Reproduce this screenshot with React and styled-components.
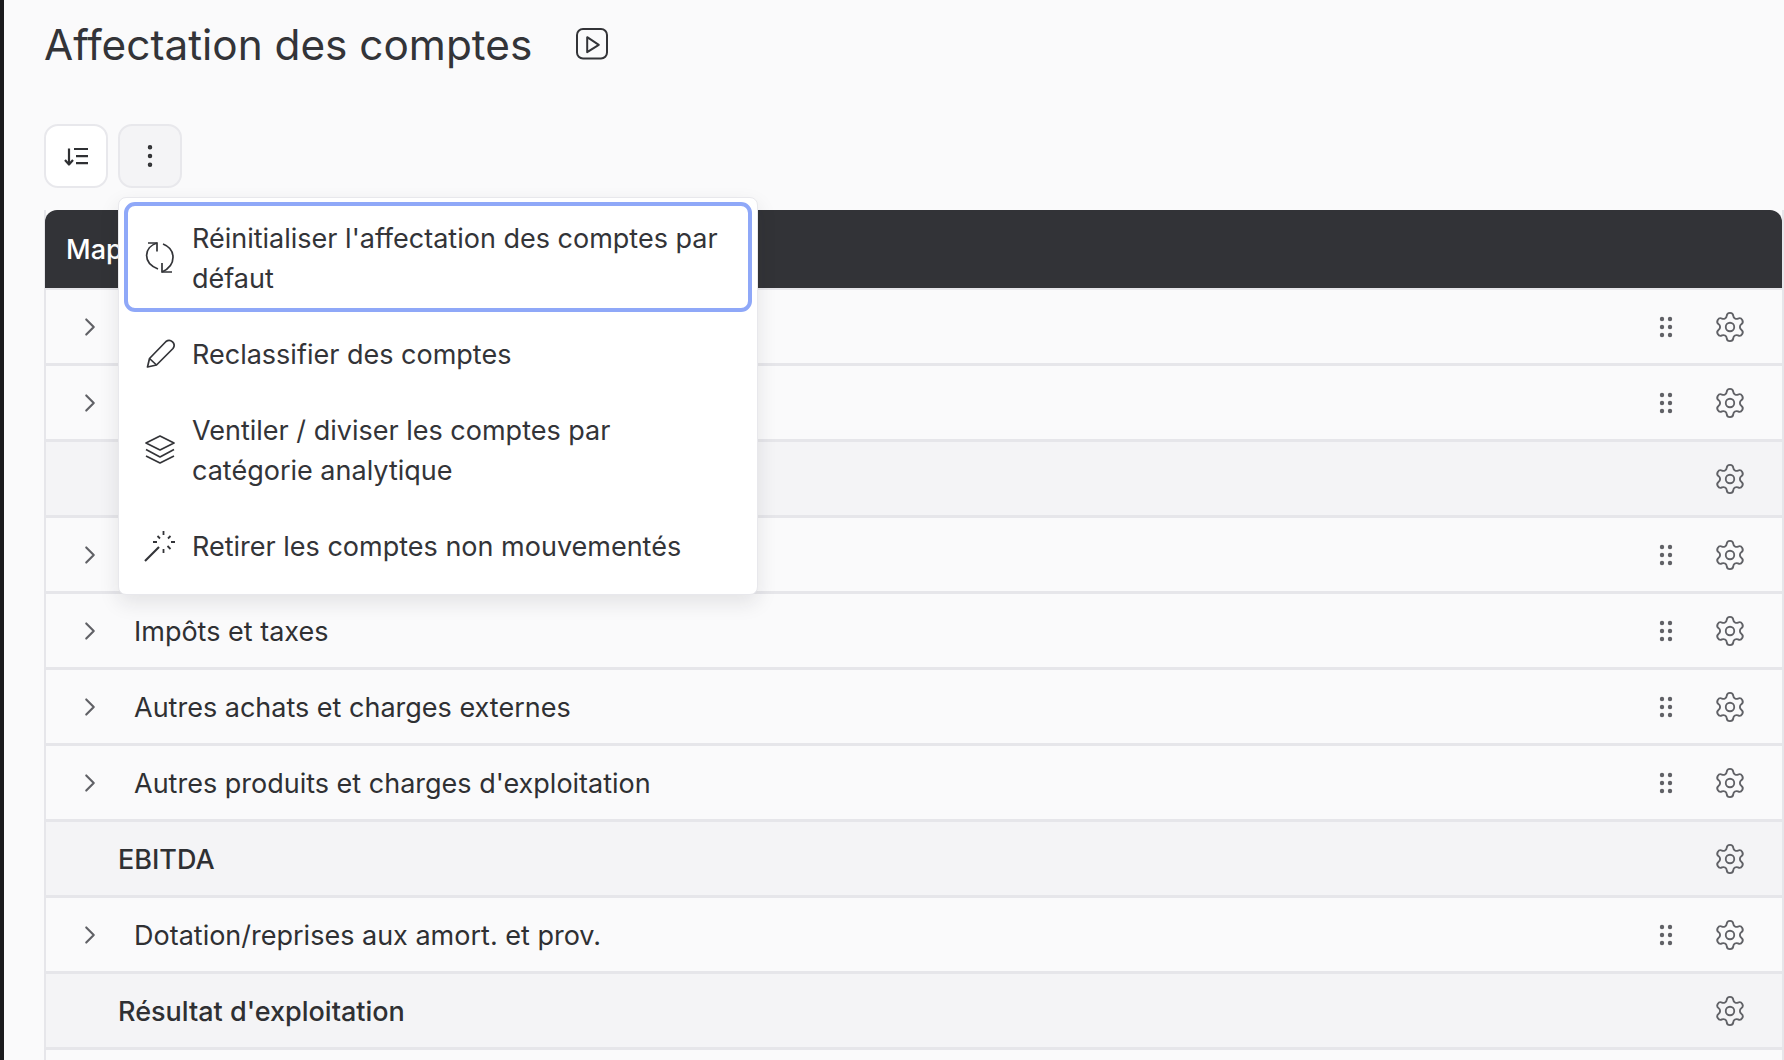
import React from 'react';
import styled, { createGlobalStyle } from 'styled-components';
import { ChevronRight, EllipsisVertical, Settings } from 'lucide-react';

const GlobalStyle = createGlobalStyle`
  html, body {
    margin: 0;
    height: 100%;
    background: #fafafb;
    overflow: hidden;
  }
  * { box-sizing: border-box; }
`;

const Page = styled.div`
  height: 1060px;
  overflow: hidden;
  border-left: 4px solid #1b1b1d;
  padding: 14px 0 0 40px;
  font-family: Inter, "Liberation Sans", sans-serif;
  color: #2f3033;
`;

const TitleRow = styled.div`
  display: flex;
  align-items: center;
  gap: 44px;
  height: 60px;
`;

const Title = styled.h1`
  margin: 0;
  padding-top: 2px;
  font-size: 42.3px;
  font-weight: 400;
  line-height: 60px;
  color: #333438;
`;

const Toolbar = styled.div`
  position: relative;
  display: flex;
  gap: 10px;
  margin-top: 50px;
`;

const ToolButton = styled.button`
  display: flex;
  align-items: center;
  justify-content: center;
  width: 64px;
  height: 64px;
  padding: 0;
  border: 2px solid #e8e8ec;
  border-radius: 14px;
  color: #2f3033;
  background: ${(p) => (p.$active ? '#f4f4f6' : '#ffffff')};
`;

const Menu = styled.div`
  position: absolute;
  top: 73px;
  left: 74px;
  z-index: 5;
  width: 640px;
  padding: 4px 5px 8px;
  border: 1px solid #e8e8ec;
  border-radius: 8px;
  background: #ffffff;
  box-shadow: 0 8px 20px rgba(30, 30, 40, 0.1);
`;

const MenuItem = styled.div`
  display: flex;
  align-items: center;
  gap: 12px;
  min-height: 82px;
  padding: 13px 23px 9px 12px;
  border: 4px solid ${(p) => (p.$focused ? '#8fa8f8' : 'transparent')};
  border-radius: 11px;
  font-size: 27px;
  line-height: 40px;
  color: #333438;
`;

const MenuLabel = styled.span`
  flex: 1;
`;

const Table = styled.div`
  margin-top: 22px;
  border-left: 2px solid #e6e6ea;
  border-right: 2px solid #e6e6ea;
`;

const Head = styled.div`
  height: 80px;
  margin-left: -1px;
  padding-left: 21px;
  border-radius: 12px 12px 0 0;
  border-bottom: 2px solid #e6e6ea;
  background: #323337;
  color: #ffffff;
  font-size: 27px;
  font-weight: 500;
  line-height: 80px;
`;

const Row = styled.div`
  display: flex;
  align-items: center;
  height: 76px;
  border-bottom: 3px solid #e6e6ea;
  background: ${(p) => (p.$total ? '#f4f4f6' : '#fafafb')};
  font-size: 27px;
`;

const Toggle = styled.span`
  display: flex;
  align-items: center;
  justify-content: center;
  flex: none;
  width: 88px;
  color: #606166;
`;

const Label = styled.span`
  flex: 1;
  padding-top: 2px;
  color: #2f3033;
  font-weight: ${(p) => (p.$total ? 500 : 400)};
  padding-left: ${(p) => (p.$total ? '72px' : '0')};
`;

const ActionSlot = styled.span`
  display: flex;
  align-items: center;
  justify-content: center;
  flex: none;
  width: 64px;
  color: #606166;
`;

const Actions = styled.div`
  display: flex;
  flex: none;
  margin-right: 20px;
`;

const PlayIcon = () => (
  <svg width="32" height="32" viewBox="11.5 12.5 32 32" fill="none" stroke="#333438" strokeWidth="2" strokeLinejoin="round">
    <rect x="12.5" y="13.5" width="30" height="29.5" rx="6" />
    <path d="M22.7 21.7v15l11.6-7.4z" />
  </svg>
);

const SortIcon = () => (
  <svg width="40" height="40" viewBox="6 5.5 40 40" fill="none" stroke="currentColor" strokeWidth="2.2">
    <path d="M19 18v15" />
    <path d="M15 29.5l4 4.5 4-4.5" strokeLinejoin="round" />
    <path d="M24 18.5h14M26 25.7h12M26 32.7h12" />
  </svg>
);

const ResetIcon = () => (
  <svg width="40" height="40" viewBox="10 9 40 40" fill="none" stroke="currentColor" strokeWidth="1.7">
    <path d="M27 13C14 17 12 33 28 39" />
    <path d="M18 13h9v8.5" />
    <path d="M33 14c13 5 14 21-1 28" />
    <path d="M42 42H32v-9" />
  </svg>
);

const PencilIcon = () => (
  <svg width="40" height="40" viewBox="10 10 40 40" fill="none" stroke="currentColor" strokeWidth="1.7" strokeLinejoin="round">
    <path d="M17.5 42l2-8.5L36 16.5a5 5 0 0 1 7 7L26.5 40z" />
    <path d="M19.5 33.5l7 6.5" />
  </svg>
);

const LayersIcon = () => (
  <svg width="40" height="40" viewBox="10 11 40 40" fill="none" stroke="currentColor" strokeWidth="1.7" strokeLinejoin="round">
    <path d="M16 23l14-7 14 7-14 7z" />
    <path d="M16 29.5L30 37l14-7.5" />
    <path d="M16 36l14 7 14-7" />
  </svg>
);

const WandIcon = () => (
  <svg width="40" height="40" viewBox="10 7 40 40" fill="none" stroke="currentColor" strokeWidth="1.8">
    <path d="M15 41l14-14" strokeWidth="2.2" />
    <path d="M33.5 11v4M33.5 29v4M23 22h4M41 22h4M27.5 16l2.5 2.5M40.5 16L38 18.5M37.5 26l3 3" />
  </svg>
);

const GripIcon = () => (
  <svg width="14" height="22" viewBox="0 0 14 22" fill="currentColor">
    <circle cx="3" cy="3" r="2.2" />
    <circle cx="11" cy="3" r="2.2" />
    <circle cx="3" cy="11" r="2.2" />
    <circle cx="11" cy="11" r="2.2" />
    <circle cx="3" cy="19" r="2.2" />
    <circle cx="11" cy="19" r="2.2" />
  </svg>
);

const menuItems = [
  { label: "Réinitialiser l'affectation des comptes par défaut", icon: <ResetIcon />, focused: true },
  { label: 'Reclassifier des comptes', icon: <PencilIcon /> },
  { label: 'Ventiler / diviser les comptes par catégorie analytique', icon: <LayersIcon /> },
  { label: 'Retirer les comptes non mouvementés', icon: <WandIcon /> },
];

const rows = [
  { label: '' },
  { label: '' },
  { label: '', total: true },
  { label: '' },
  { label: 'Impôts et taxes' },
  { label: 'Autres achats et charges externes' },
  { label: "Autres produits et charges d'exploitation" },
  { label: 'EBITDA', total: true },
  { label: 'Dotation/reprises aux amort. et prov.' },
  { label: "Résultat d'exploitation", total: true },
  { label: '' },
];

const App = () => {
  return (
    <Page>
      <GlobalStyle />
      <TitleRow>
        <Title>Affectation des comptes</Title>
        <PlayIcon />
      </TitleRow>

      <Toolbar>
        <ToolButton type="button">
          <SortIcon />
        </ToolButton>
        <ToolButton type="button" $active>
          <EllipsisVertical size={30} strokeWidth={1.6} />
        </ToolButton>
        <Menu>
          {menuItems.map((item) => (
            <MenuItem key={item.label} $focused={item.focused}>
              {item.icon}
              <MenuLabel>{item.label}</MenuLabel>
            </MenuItem>
          ))}
        </Menu>
      </Toolbar>

      <Table>
        <Head>Mapping</Head>
        {rows.map((row, index) => (
          <Row key={index} $total={row.total}>
            {!row.total && (
              <Toggle>
                <ChevronRight size={30} strokeWidth={1.7} />
              </Toggle>
            )}
            <Label $total={row.total}>{row.label}</Label>
            <Actions>
              {!row.total && (
                <ActionSlot>
                  <GripIcon />
                </ActionSlot>
              )}
              <ActionSlot>
                <Settings size={34} strokeWidth={1.3} />
              </ActionSlot>
            </Actions>
          </Row>
        ))}
      </Table>
    </Page>
  );
};

export default App;
